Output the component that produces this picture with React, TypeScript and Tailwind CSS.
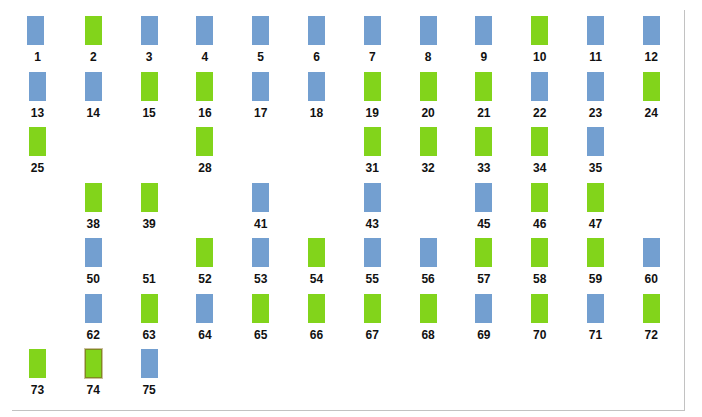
import React from 'react';

type SeatState = 'blue' | 'green' | 'selected' | 'ghost' | 'none';

// one letter per seat, 12 per row: b = blue, g = green, s = selected, o = label only, - = empty
const LAYOUT = [
  'bgbbbbbbbgbb',
  'bbggbbgggbbg',
  'g--g--ggggb-',
  '-gg-b-b-bgg-',
  '-bogbgbbgggb',
  '-bgbggggbgbg',
  'gsb',
].join('');

const STATE_BY_CODE: Record<string, SeatState> = {
  b: 'blue',
  g: 'green',
  s: 'selected',
  o: 'ghost',
  '-': 'none',
};

function Seat({ number, state }: { number: number; state: SeatState }): React.JSX.Element {
  if (state === 'none') return <div className="h-[55.5px]" />;

  // the first seat sits a little left of its column
  const nudge = number === 1 ? '-translate-x-[2px]' : '';

  return (
    <div className="h-[55.5px] pl-[17px]">
      <div className="flex w-[17px] flex-col items-center">
        {state === 'blue' && <div className={`h-[29px] w-[17px] bg-[#739fd0] ${nudge}`} />}
        {state === 'green' && <div className="h-[29px] w-[17px] bg-[#82d41b]" />}
        {state === 'selected' && (
          <div className="h-[29px] w-[17px] border border-[#7f8c1f] bg-[#82d41b] outline outline-1 outline-[#cbbf9f]" />
        )}
        {state === 'ghost' && <div className="h-[29px] w-[17px]" />}
        <span className="mt-[5px] whitespace-nowrap text-[12px] font-bold leading-[14px] text-[#111]">
          {number}
        </span>
      </div>
    </div>
  );
}

export default function App(): React.JSX.Element {
  const seats = LAYOUT.split('').map((code, i) => ({ number: i + 1, state: STATE_BY_CODE[code] }));

  return (
    <div
      className="h-[417px] w-[702px] bg-white pl-[12px] pt-[10px]"
      style={{ fontFamily: '"Liberation Sans", Arial, sans-serif' }}
    >
      <div className="h-[401px] w-[673px] border-b border-r border-[#c2c2c2] pt-[6px]">
        <div className="grid grid-cols-[repeat(12,55.8px)]">
          {seats.map((seat) => (
            <Seat key={seat.number} number={seat.number} state={seat.state} />
          ))}
        </div>
      </div>
    </div>
  );
}
